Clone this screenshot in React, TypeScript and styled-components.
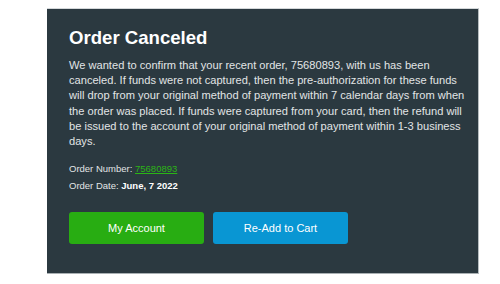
import React from "react";
import styled, { createGlobalStyle } from "styled-components";

const Global = createGlobalStyle`
  html, body { margin: 0; padding: 0; background: #ffffff; }
  body { font-family: "Liberation Sans", Arial, sans-serif; }
`;

const Page = styled.div`
  padding: 8px 0 0 47px;
`;

const Panel = styled.div`
  box-sizing: border-box;
  width: 432px;
  height: 266px;
  background: #2b3940;
  border-top: 1px solid #d4d8da;
  border-bottom: 1px solid #a9b0b3;
  border-right: 1px solid #b7bec1;
  padding: 18px 12px 0 22px;
  color: #e6e8e9;
`;

const Title = styled.h1`
  margin: 0 0 10px 0;
  font-size: 18.6px;
  line-height: 21px;
  font-weight: 700;
  color: #ffffff;
`;

const Body = styled.p`
  margin: 0 0 12px 0;
  font-size: 11.1px;
  line-height: 15.2px;
  color: #e2e5e6;
  white-space: nowrap;
`;

const Meta = styled.div`
  font-size: 9.5px;
  line-height: 16.3px;
  color: #e2e5e6;
`;

const Strong = styled.b`
  color: #ffffff;
  font-weight: 700;
`;

const Link = styled.a`
  color: #2bb515;
  text-decoration: underline;
`;

const Actions = styled.div`
  display: flex;
  gap: 9px;
  margin-top: 18px;
`;

const Button = styled.button<{ $tone: "green" | "blue" }>`
  width: 135px;
  height: 32px;
  border: none;
  border-radius: 3px;
  background: ${(p) => (p.$tone === "green" ? "#28ad12" : "#0996d3")};
  color: #ffffff;
  font-family: "Liberation Sans", Arial, sans-serif;
  font-size: 11px;
  cursor: pointer;
`;

const lines = [
  "We wanted to confirm that your recent order, 75680893, with us has been",
  "canceled. If funds were not captured, then the pre-authorization for these funds",
  "will drop from your original method of payment within 7 calendar days from when",
  "the order was placed. If funds were captured from your card, then the refund will",
  "be issued to the account of your original method of payment within 1-3 business",
  "days.",
];

export default function App() {
  return (
    <>
      <Global />
      <Page>
        <Panel>
          <Title>Order Canceled</Title>
          <Body>
            {lines.map((l, i) => (
              <React.Fragment key={i}>
                {l}
                {i < lines.length - 1 && <br />}
              </React.Fragment>
            ))}
          </Body>
          <Meta>
            Order Number: <Link href="#">75680893</Link>
          </Meta>
          <Meta>
            Order Date: <Strong>June, 7 2022</Strong>
          </Meta>
          <Actions>
            <Button $tone="green">My Account</Button>
            <Button $tone="blue">Re-Add to Cart</Button>
          </Actions>
        </Panel>
      </Page>
    </>
  );
}
